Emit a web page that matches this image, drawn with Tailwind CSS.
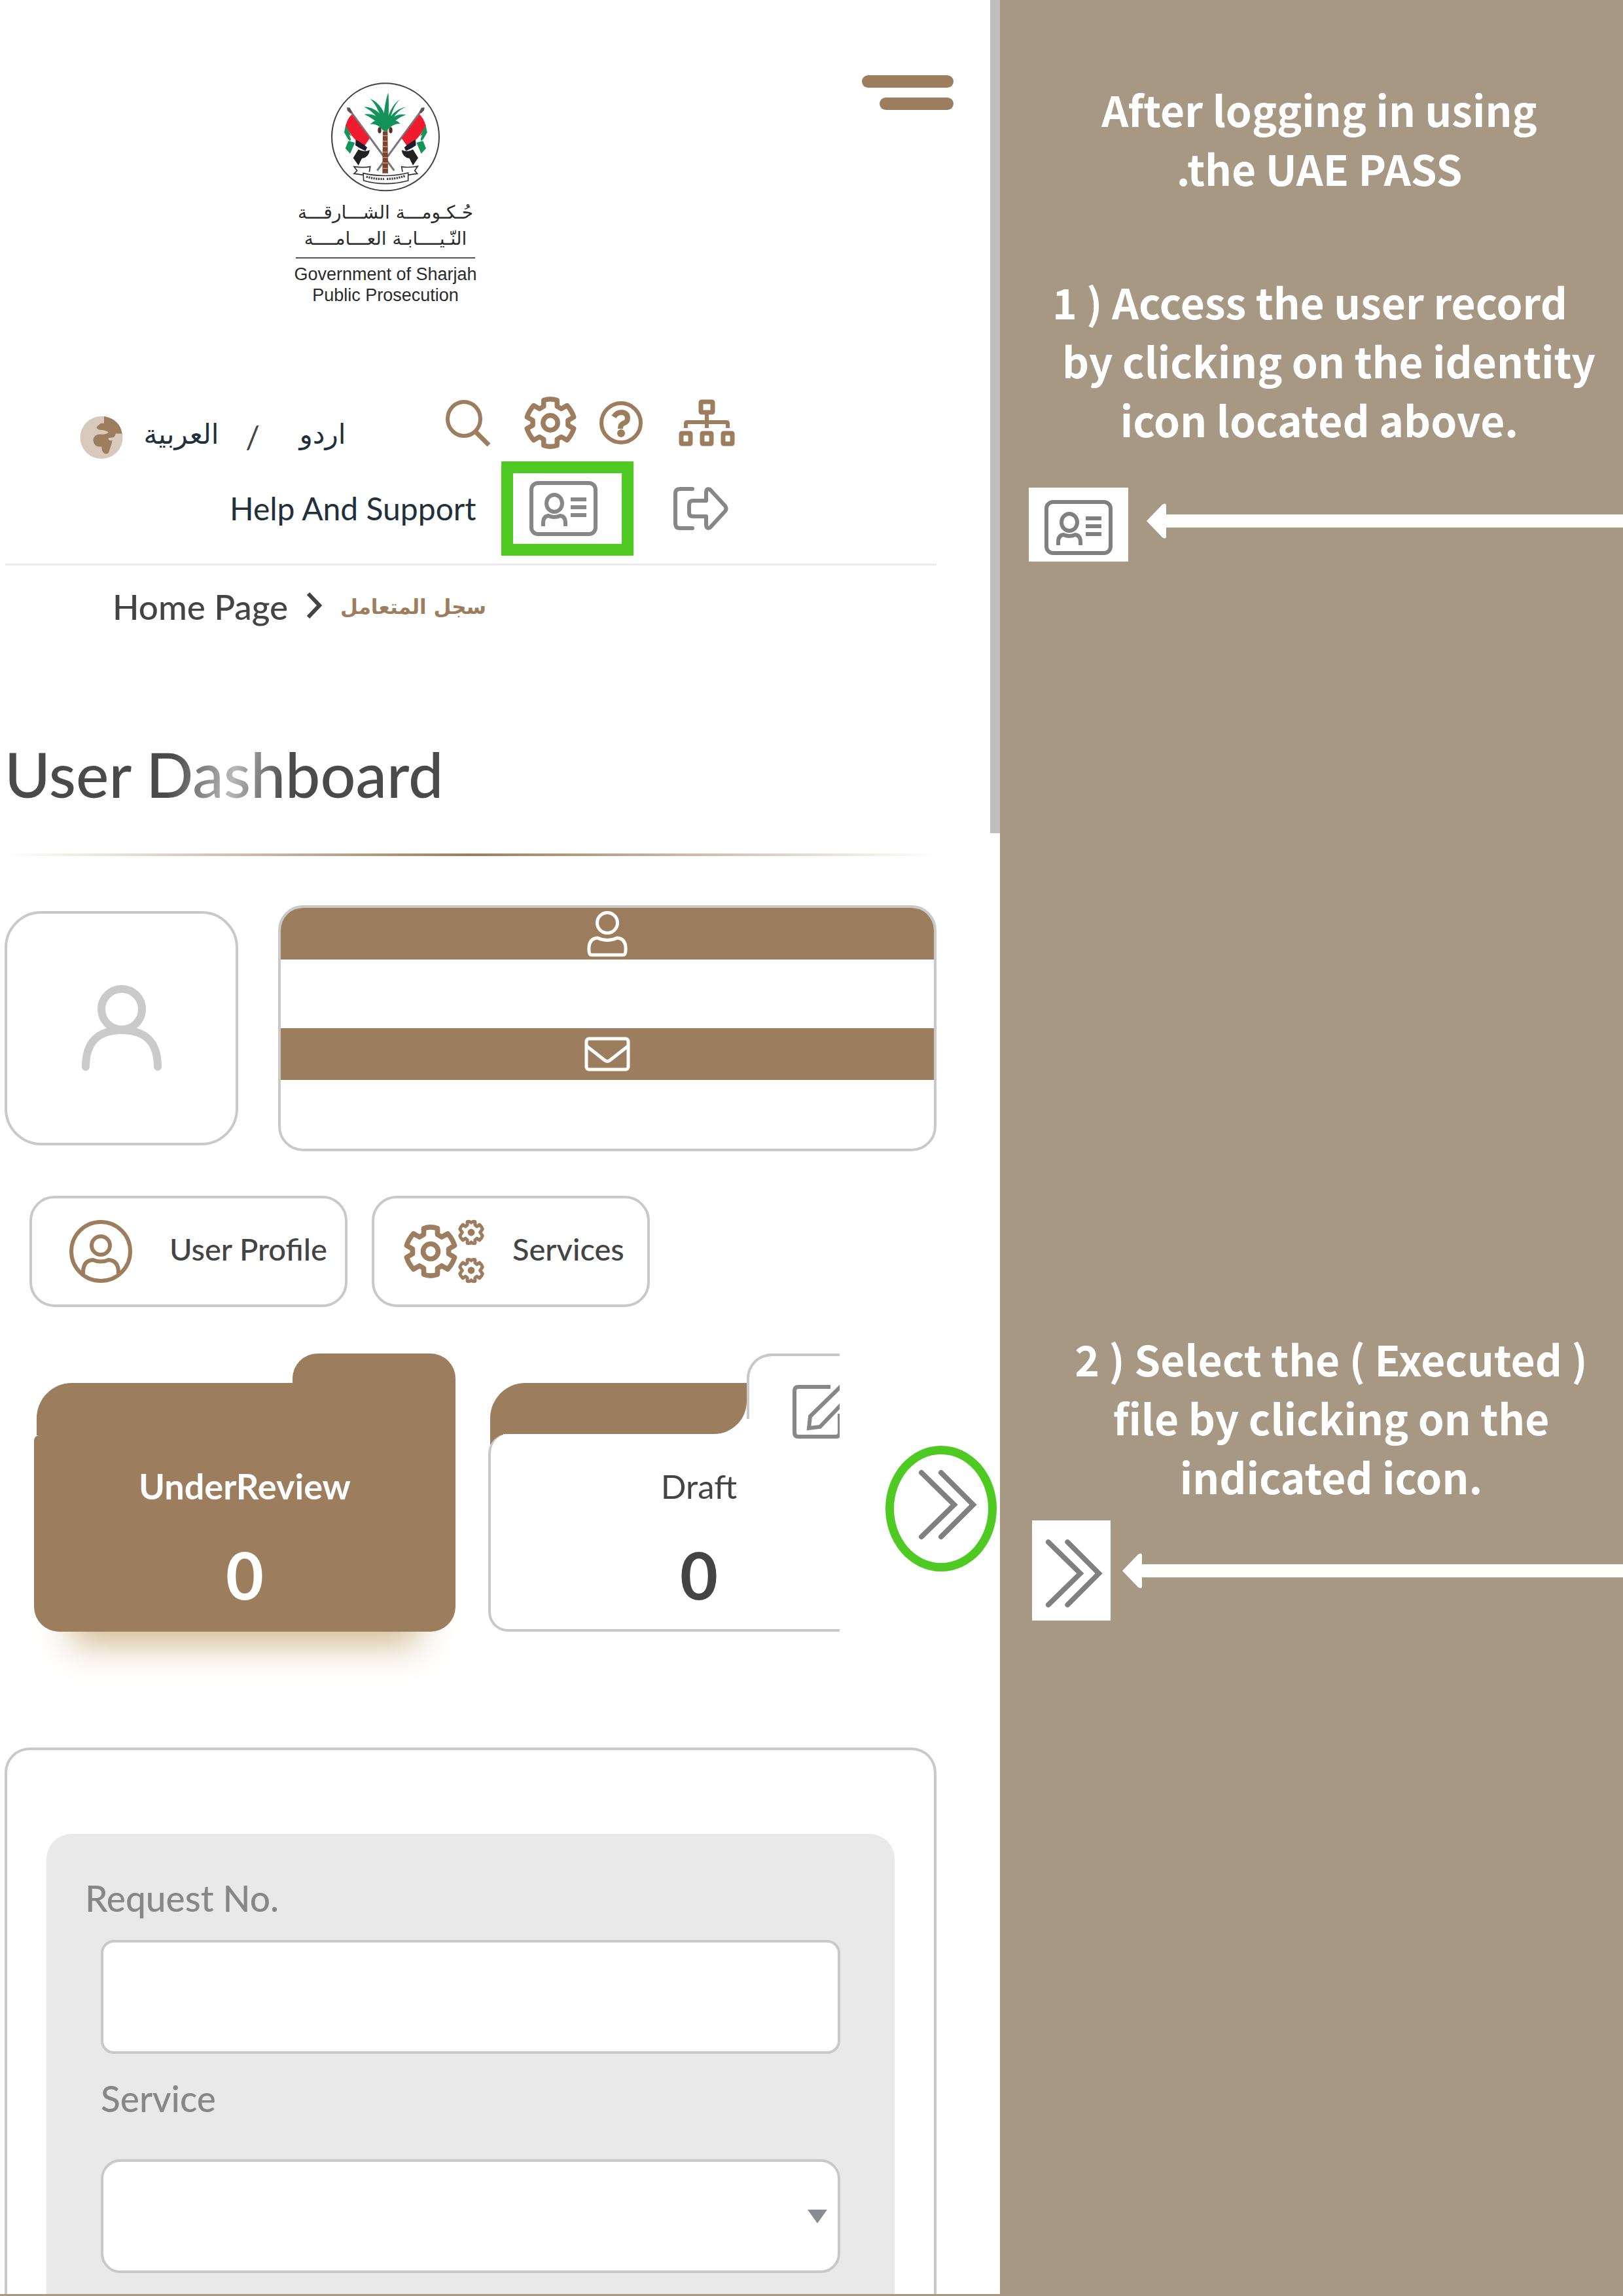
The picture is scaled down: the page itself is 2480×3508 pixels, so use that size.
<!DOCTYPE html>
<html lang="en">
<head>
<meta charset="utf-8">
<meta name="viewport" content="width=device-width, initial-scale=1">
<title>User Dashboard</title>
<script src="https://cdn.jsdelivr.net/npm/@tailwindcss/browser@4"></script>
</head>
<body class="bg-white font-['Lato','DejaVu_Sans',sans-serif] text-[#444]">

<!-- Shared icon shapes -->
<svg class="hidden" aria-hidden="true">
  <symbol id="gear" viewBox="-43 -43 86 86">
    <path fill="none" stroke="currentColor" stroke-width="8" stroke-linejoin="round" d="M-11-27V-37Q0-41 11-37V-27L17.9-23 27.4-28.5Q35-20 38.4-9.5L28.9-4V4L38.4 9.5Q35 20 27.4 28.5L17.9 23 11 27V37Q0 41-11 37V27L-17.9 23-27.4 28.5Q-35 20-38.4 9.5L-28.9 4V-4L-38.4-9.5Q-35-20-27.4-28.5L-17.9-23Z"/>
    <circle r="12" fill="none" stroke="currentColor" stroke-width="8"/>
  </symbol>
  <symbol id="cog" viewBox="-44 -44 88 88">
    <path fill="none" stroke="currentColor" stroke-width="11" stroke-linejoin="round" d="M-13-25V-36Q-6-39 0-33 6-39 13-36V-25L19-20 28-26Q36-19 38-11L30 0 38 11Q36 19 28 26L19 20 13 25V36Q6 39 0 33-6 39-13 36V25L-19 20-28 26Q-36 19-38 11L-30 0-38-11Q-36-19-28-26L-19-20Z"/>
    <circle r="12" fill="currentColor"/>
  </symbol>
  <symbol id="idcard" viewBox="0 0 104 84">
    <g fill="none" stroke="currentColor" stroke-width="6">
      <rect x="3" y="3" width="98" height="78" rx="10"/>
      <ellipse cx="38" cy="34" rx="12" ry="13"/>
      <path d="M21 69v-5q0-10 8-11 9 4 18 0 8 1 8 11v5"/>
      <path d="M63 28h24M63 40h24M63 52h24"/>
    </g>
  </symbol>
  <symbol id="next" viewBox="0 0 90 108">
    <path fill="none" stroke="currentColor" stroke-width="8" stroke-linecap="round" d="M5 5 55 54 5 103M35 5 84 54 35 103"/>
  </symbol>
</svg>

<div class="grid min-h-screen grid-cols-[1528fr_952fr]">

  <!-- Portal -->
  <main class="relative flex flex-col overflow-hidden border-b-3 border-[#a79884] bg-white">
    <div class="absolute right-0 top-0 h-[1273px] w-[15px] bg-[#bfbfbf]"></div>

    <header>
      <div class="flex items-start justify-between pl-[452px] pr-[71px] pt-[115px]">
        <div class="flex w-[274px] flex-col items-center pt-[10px] text-[#2b2b2b]">
          <svg class="h-[168px] w-[168px]" viewBox="248 73 504 504" role="img" aria-label="Emblem of Sharjah">
            <circle cx="500" cy="326" r="246" fill="#fff" stroke="#444" stroke-width="6"/>
            <path d="M345 215 540 480M657 215 462 480" stroke="#777" stroke-width="9" fill="none"/>
            <path d="M323 190l14 2 12 22-10 4-14-14zM679 190l-14 2-12 22 10 4 14-14z" fill="#555"/>
            <g id="flag">
              <path d="M318 268 345 325 338 345 328 335 311 305z" fill="#13945a"/>
              <path d="M334 316 372 342 362 372 345 405 372 450 330 400 345 345z" fill="#fff"/>
              <path d="M330 344 360 352 350 375 338 402 316 378z" fill="#13945a"/>
              <path d="M346 222 428 332 404 366Q350 345 318 272 326 240 346 222z" fill="#ee1c2e"/>
              <path d="M364 338Q385 350 402 362L416 374 408 390Q380 378 362 364z" fill="#1d1d28"/>
              <path d="M376 383Q400 398 428 386 424 420 392 424L376 456 352 422z" fill="#222"/>
            </g>
            <use href="#flag" transform="matrix(-1 0 0 1 1002 0)"/>
            <path d="M488 300h22l2 192h-26z" fill="#7b4330"/>
            <path d="M488 320h22M488 345h23M488 370h23M487 395h24M487 420h24M486 445h25M486 470h26" stroke="#c99a80" stroke-width="4"/>
            <g fill="#11935a">
              <path d="M492 300Q488 190 513 122 518 190 510 300z"/>
              <path d="M490 280Q474 195 430 150 496 180 508 270z"/>
              <path d="M502 280Q514 190 568 152 526 190 514 290z"/>
              <path d="M492 280Q456 215 402 188 474 190 508 275z"/>
              <path d="M500 280Q526 200 598 188 540 205 514 290z"/>
              <path d="M490 290Q450 240 402 222 464 214 504 275z"/>
              <path d="M502 290Q550 240 594 224 540 212 498 275z"/>
              <path d="M490 297Q460 260 430 268 462 230 504 275z"/>
              <path d="M504 297Q540 260 568 266 540 230 498 275z"/>
            </g>
            <ellipse cx="473" cy="295" rx="8" ry="14" fill="#5a2a20"/><ellipse cx="524" cy="295" rx="8" ry="14" fill="#5a2a20"/>
            <path d="M398 492Q500 516 604 490V526Q500 554 400 526z" fill="#fff" stroke="#333" stroke-width="5"/>
            <path d="M398 500Q372 496 356 494L370 480 356 462Q400 468 430 462L426 486M604 500Q630 496 646 494L634 480 648 460Q600 468 574 462L578 486" fill="none" stroke="#333" stroke-width="5"/>
            <path d="M412 508Q455 520 494 518M506 518Q550 518 590 504" stroke="#444" stroke-width="10" stroke-dasharray="7 4" fill="none"/>
          </svg>
          <p lang="ar" dir="rtl" class="mt-3 whitespace-nowrap font-['DejaVu_Sans',sans-serif] text-[28px] leading-[40px]">حُـكـومـــة الشـــارقـــة</p>
          <p lang="ar" dir="rtl" class="whitespace-nowrap font-['DejaVu_Sans',sans-serif] text-[28px] leading-[40px]">النّـيــــابـة العـــامــــة</p>
          <div class="mt-2 h-[2px] w-full bg-[#555]"></div>
          <p class="mt-2 whitespace-nowrap font-['Liberation_Sans',sans-serif] text-[27px] leading-8">Government of Sharjah</p>
          <p class="whitespace-nowrap font-['Liberation_Sans',sans-serif] text-[27px] leading-8">Public Prosecution</p>
        </div>
        <button type="button" aria-label="Menu" class="flex flex-col items-end gap-[15px]">
          <span class="h-[19px] w-[140px] rounded-full bg-[#9c7e5e]"></span>
          <span class="h-[19px] w-[113px] rounded-full bg-[#9c7e5e]"></span>
        </button>
      </div>

      <div class="mt-[136px] flex h-[86px] items-center pl-[122px] text-[#9c7e5e]">
        <div class="mt-[44px] flex items-center">
          <svg class="h-[67px] w-[66px]" viewBox="0 0 66 68" aria-hidden="true">
            <circle cx="33" cy="34" r="33" fill="#d7cabd"/>
            <path d="M37 1Q62 6 65 28H55Q54 34 50 34 42 34 44 37 46 40 50 38L48 46 44 58Q38 62 34 54L33 48Q22 50 20 38 22 28 32 29 40 30 44 26 40 22 30 22 24 20 26 17L32 12 37 12Z" fill="#9c7e5e"/>
          </svg>
          <a href="#ar" lang="ar" class="ml-[30px] w-[118px] pb-2 text-center font-['DejaVu_Sans',sans-serif] text-[42px] leading-[60px] text-[#22303c]">العربية</a>
          <span class="ml-[36px] w-[28px] text-center text-[48px] leading-[60px] text-[#444]">/</span>
          <a href="#ur" lang="ur" class="ml-[54px] w-[78px] pb-2 text-center font-['DejaVu_Sans',sans-serif] text-[42px] leading-[60px] text-[#22303c]">اردو</a>
        </div>
        <button type="button" aria-label="Search" class="ml-[149px]">
          <svg class="h-[72px] w-[70px]" viewBox="0 0 70 72" fill="none" stroke="currentColor" stroke-width="6"><ellipse cx="28" cy="30" rx="25" ry="26"/><path stroke-width="7" d="M46 50 66 70"/></svg>
        </button>
        <button type="button" aria-label="Settings" class="ml-[50px]"><svg class="h-[84px] w-[80px]"><use href="#gear"/></svg></button>
        <button type="button" aria-label="Help" class="ml-[35px]">
          <svg class="h-[68px] w-[66px]" viewBox="0 0 66 68" fill="none" stroke="currentColor"><circle cx="33" cy="34" r="30" stroke-width="6"/><path stroke-width="8" d="M22 25Q26 18 34 18 43 19 43 27 43 33 36 35 32 37 32 43"/><circle cx="33" cy="50" r="6" fill="currentColor" stroke="none"/></svg>
        </button>
        <button type="button" aria-label="Site map" class="ml-[55px]">
          <svg class="h-[72px] w-[86px]" viewBox="0 0 86 72" fill="none" stroke="currentColor" stroke-width="7"><rect x="34" y="4" width="18" height="16" rx="1"/><rect x="4" y="52" width="14" height="16" rx="1"/><rect x="36" y="52" width="14" height="16" rx="1"/><rect x="68" y="52" width="14" height="16" rx="1"/><path stroke-width="6" d="M43 21V44M11 44V37Q11 35 13 35H73Q75 35 75 37V44"/></svg>
        </button>
      </div>

      <div class="mt-[16px] flex h-[144px] items-center pl-[351px] text-[#878787]">
        <a href="#support" class="w-[376px] whitespace-nowrap text-[48px] font-normal leading-[56px] text-[#22303c]">Help And Support</a>
        <a href="#record" aria-label="User record" class="ml-[39px] flex h-[144px] w-[202px] items-center border-[18px] border-[#4fca22] pl-[25px]"><svg class="h-[84px] w-[104px]"><use href="#idcard"/></svg></a>
        <a href="#logout" aria-label="Log out" class="ml-[61px]">
          <svg class="h-[68px] w-[84px]" viewBox="0 0 84 68" fill="none" stroke="currentColor" stroke-width="6" stroke-linejoin="round" stroke-linecap="round"><path d="M29 4H10Q3 4 3 11V57Q3 64 10 64H29"/><path d="M50 22H30Q24 22 24 28V40Q24 46 30 46H50V58Q50 66 56 63L79 38Q82 34 79 30L56 5Q50 2 50 10Z"/></svg>
        </a>
      </div>
    </header>

    <div class="ml-2 mr-[97px] mt-3 h-[3px] shrink-0 bg-[#ececec]"></div>

    <nav aria-label="Breadcrumb" class="mt-[28px] flex h-[70px] items-center pl-[172px]">
      <a href="#home" class="w-[268px] whitespace-nowrap text-[53px] font-medium leading-[64px]">Home Page</a>
      <svg class="ml-[28px] mb-[4px] h-[42px] w-[24px]" viewBox="0 0 24 42" fill="none" stroke="#444" stroke-width="6" aria-hidden="true"><path d="M3 3 20 21 3 39"/></svg>
      <span lang="ar" class="ml-[28px] w-[220px] whitespace-nowrap font-['DejaVu_Sans',sans-serif] text-[31px] font-bold leading-[60px] text-[#9c7e5e]">سجل المتعامل</span>
    </nav>

    <h1 class="mt-[160px] whitespace-nowrap pl-[7px] text-[95px] font-medium leading-[120px]"><span class="bg-[linear-gradient(100deg,#4a4a4a_38%,#b8b8b8_52%,#4a4a4a_64%)] bg-clip-text text-transparent">User Dashboard</span></h1>
    <div class="ml-2 mr-[97px] mt-[62px] h-1 shrink-0 bg-[linear-gradient(90deg,transparent,#9c7e5e_50%,transparent)]"></div>

    <section aria-label="Account" class="mt-[75px] flex items-center gap-[61px] pl-[7px] pr-[97px]">
      <div class="flex h-[358px] w-[357px] shrink-0 items-center justify-center rounded-[56px] border-4 border-[#c9c9c9]">
        <svg class="h-[132px] w-[122px]" viewBox="0 0 122 132" fill="none" stroke="#cacaca" stroke-width="12" stroke-linecap="round" aria-hidden="true"><ellipse cx="61" cy="37" rx="31" ry="31"/><path d="M6 125Q6 69 61 69 116 69 116 125"/></svg>
      </div>
      <div class="h-[376px] flex-1 overflow-hidden rounded-[38px] border-4 border-[#c9c9c9]">
        <div class="flex h-[79px] items-center justify-center bg-[#9c7e5e]">
          <svg class="h-[70px] w-[62px]" viewBox="0 0 62 70" fill="none" stroke="#fff" stroke-width="5" aria-hidden="true"><ellipse cx="31" cy="18" rx="15.5" ry="15.5"/><path d="M3 60Q2 42 16 41 31 48 46 41 60 42 59 60 59 67 55 67H7Q3 67 3 60Z"/></svg>
        </div>
        <div class="h-[105px]"></div>
        <div class="flex h-[79px] items-center justify-center bg-[#9c7e5e]">
          <svg class="h-[53px] w-[70px]" viewBox="0 0 70 53" fill="none" stroke="#fff" stroke-width="5" aria-hidden="true"><rect x="3" y="3" width="64" height="47" rx="4"/><path d="M3 14 31 36Q35 39 39 36L67 14"/></svg>
        </div>
      </div>
    </section>

    <div class="mt-[68px] flex gap-[37px] pl-[45px]">
      <button type="button" class="flex h-[170px] w-[486px] items-center rounded-[38px] border-4 border-[#c9c9c9] pl-[57px] text-[47px] font-medium">
        <svg class="h-[96px] w-[96px] text-[#9c7e5e]" viewBox="0 0 96 96" fill="none" stroke="currentColor" stroke-width="6" aria-hidden="true"><circle cx="48" cy="48" r="45"/><circle cx="48" cy="39" r="14"/><path d="M21 83Q20 62 36 61 48 66 60 61 76 62 75 83"/></svg>
        <span class="ml-[57px] whitespace-nowrap pb-2 leading-[60px]">User Profile</span>
      </button>
      <button type="button" class="flex h-[170px] w-[425px] items-center rounded-[38px] border-4 border-[#c9c9c9] pl-[45px] text-[47px] font-medium">
        <span class="flex items-center text-[#9c7e5e]">
          <svg class="h-[86px] w-[82px]"><use href="#gear"/></svg>
          <span class="flex flex-col gap-[18px]">
            <svg class="h-[40px] w-[42px]"><use href="#cog"/></svg>
            <svg class="h-[40px] w-[42px]"><use href="#cog"/></svg>
          </span>
        </span>
        <span class="ml-[42px] whitespace-nowrap pb-2 leading-[60px]">Services</span>
      </button>
    </div>

    <section aria-label="Request files" class="mt-[71px] flex shrink-0 items-start pb-[177px] pl-[52px]">
      <div class="flex w-[1231px] gap-[50px] overflow-x-clip">
        <!-- Active folder -->
        <a href="#under-review" class="flex w-[644px] shrink-0 flex-col text-white">
          <span class="ml-auto h-[45px] w-[249px] rounded-tl-[38px] rounded-tr-[38px] bg-[#9c7e5e]"></span>
          <span class="ml-1 h-[80px] rounded-tl-[54px] bg-[#9c7e5e]"></span>
          <span class="flex h-[300px] flex-col items-center rounded-b-[38px] rounded-tl-[8px] bg-[#9c7e5e] shadow-[0_76px_50px_-56px_#d3bb93]">
            <span class="mt-[46px] text-[54px] font-bold leading-[64px]">UnderReview</span>
            <span class="mt-[42px] text-[100px] font-bold leading-[120px]">0</span>
          </span>
        </a>
        <!-- Idle folder -->
        <a href="#draft" class="flex w-[644px] shrink-0 flex-col">
          <span class="flex">
            <span class="ml-[3px] mt-[45px] h-[78px] flex-1 rounded-tl-[54px] rounded-br-[50px] bg-[#9c7e5e]"></span>
            <span class="relative z-10 h-[123px] w-[249px] rounded-tl-[38px] border-t-4 border-[#c9c9c9] pl-[70px] pt-[42px]">
              <span class="absolute -top-1 left-0 h-[100px] w-[60px] rounded-tl-[38px] border-l-4 border-t-4 border-[#c9c9c9]"></span>
              <svg class="h-[84px] w-[90px]" viewBox="0 0 90 84" fill="none" stroke="#878787" stroke-width="6" aria-hidden="true"><path d="M58 5H9Q3 5 3 11V75Q3 81 9 81H66Q72 81 72 75V46"/><path d="M25 68 27 50 72 6 86 20 42 66Z"/></svg>
            </span>
          </span>
          <span class="flex bg-[linear-gradient(#9c7e5e,#9c7e5e)] bg-[length:20px_16px] bg-[position:3px_0] bg-no-repeat">
            <span class="flex h-[302px] flex-1 flex-col items-center rounded-[30px] border-4 border-t-0 border-[#c9c9c9] bg-white">
              <span class="mt-[48px] text-[51px] leading-[64px]">Draft</span>
              <span class="mt-[42px] text-[100px] font-bold leading-[120px]">0</span>
            </span>
          </span>
        </a>
      </div>
      <button type="button" aria-label="Next files" class="ml-[70px] mt-[141px] flex h-[192px] w-[170px] items-center justify-center rounded-[50%] border-[13px] border-[#4fca22] pl-[20px] text-[#808080]"><svg class="mb-[12px] h-[108px] w-[90px]"><use href="#next"/></svg></button>
    </section>

    <form class="ml-[7px] mr-[97px] flex flex-1 flex-col rounded-t-[38px] border-4 border-b-0 border-[#c9c9c9] px-[60px] pt-[128px]">
      <div class="flex flex-1 flex-col rounded-t-[38px] bg-[#e9e9e9] px-[83px] pt-[66px] text-[55px] font-medium leading-[64px] text-[#878787]">
        <label for="request-no" class="-ml-6">Request No.</label>
        <input id="request-no" type="text" class="mt-[32px] h-[174px] w-full shrink-0 rounded-[20px] border-4 border-[#c9c9c9] bg-white px-8">
        <label for="service" class="mt-[36px]">Service</label>
        <div class="relative mt-[61px] h-[174px]">
          <select id="service" class="block h-full w-full appearance-none rounded-[30px] border-4 border-[#c9c9c9] bg-white px-8"><option></option></select>
          <svg class="pointer-events-none absolute right-[20px] top-[77px] h-[21px] w-[30px]" viewBox="0 0 30 21" aria-hidden="true"><path d="M0 0H30L15 21Z" fill="#878d90"/></svg>
        </div>
      </div>
    </form>
  </main>

  <!-- Instructions -->
  <aside class="bg-[#a79884] font-['Noto_Sans_CJK_JP',sans-serif] text-[64px] font-bold leading-[90px] text-white">
    <p class="pl-[24px] pt-[121px] text-center">After logging in using<br>.the UAE PASS</p>
    <p class="mt-[114px] pl-[24px] text-center">1 ) Access the user record&nbsp;&nbsp;<br>&nbsp;&nbsp;by clicking on the identity<br>icon located above.</p>
    <div class="mt-[60px] flex items-center pl-[44px]">
      <span class="flex h-[113px] w-[152px] shrink-0 items-center justify-center bg-white pt-2 text-[#808080]"><svg class="h-[84px] w-[106px]"><use href="#idcard"/></svg></span>
      <svg class="mb-[12px] ml-[28px] h-[54px] w-[30px] shrink-0" viewBox="0 0 30 54" fill="#fff" aria-hidden="true"><path d="M0 27 24 2Q30-2 30 4V50Q30 56 24 52Z"/></svg>
      <span class="mb-[12px] h-5 flex-1 bg-white"></span>
    </div>
    <p class="mt-[1172px] pl-[60px] text-center">2 ) Select the ( Executed )<br>file by clicking on the<br>indicated icon.</p>
    <div class="mt-[23px] flex items-center pl-[49px]">
      <span class="flex h-[153px] w-[120px] shrink-0 items-center justify-center bg-white pl-2 pt-2 text-[#808080]"><svg class="h-[108px] w-[88px]"><use href="#next"/></svg></span>
      <svg class="ml-[18px] h-[54px] w-[30px] shrink-0" viewBox="0 0 30 54" fill="#fff" aria-hidden="true"><path d="M0 27 24 2Q30-2 30 4V50Q30 56 24 52Z"/></svg>
      <span class="h-5 flex-1 bg-white"></span>
    </div>
  </aside>
</div>
</body>
</html>
